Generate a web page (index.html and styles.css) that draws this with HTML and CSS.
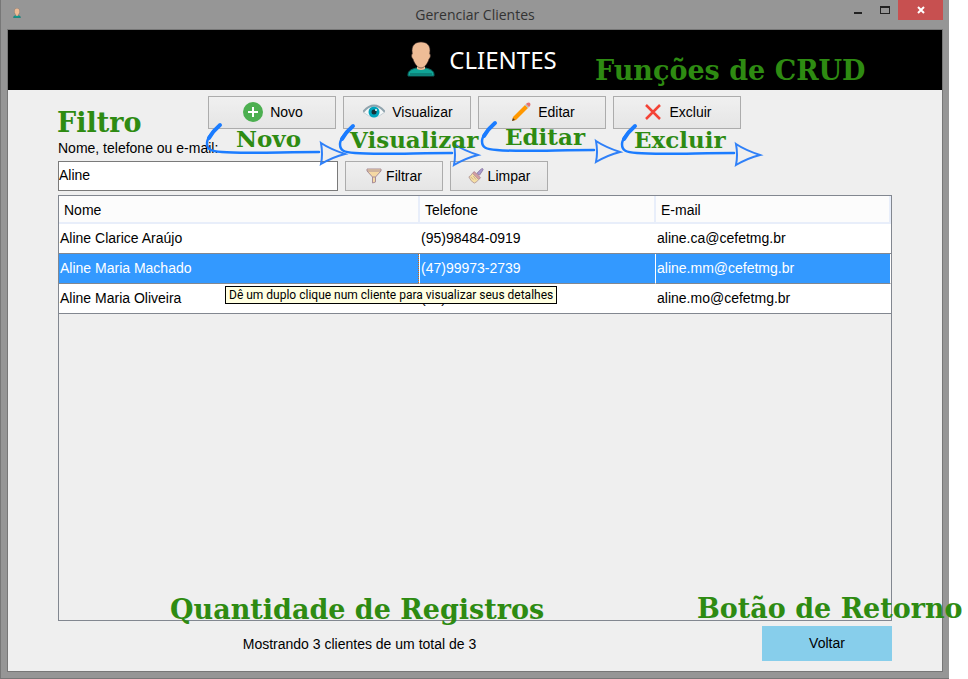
FILE: index.html
```html
<!DOCTYPE html>
<html lang="pt-BR">
<head>
<meta charset="utf-8">
<title>Gerenciar Clientes</title>
<link rel="stylesheet" href="styles.css">
</head>
<body>
<svg class="defs" width="0" height="0" aria-hidden="true">
  <symbol id="person" viewBox="0 0 28 36">
    <path fill="#0fa597" stroke="#0b5f5a" d="M1 35v-2q0-4 8-6h10q8 2 8 6v2z"/>
    <path fill="#eebc96" d="M10 24h8v4q-4 2-8 0z"/>
    <path stroke="#0b5f5a" fill="none" d="M3 33h22"/>
    <path fill="#eebc96" stroke="#3b2a26" stroke-width=".6" d="M14 1C8 1 5 4.500 5 9.500L5.300 13C4 13.500 4.500 17 6 18c1 4 4.500 9 8 9s7-5 8-9c1.500-1 2-4.500.7-5l.3-3.500C23 4.500 20 1 14 1z"/>
  </symbol>
  <symbol id="arrow" viewBox="0 0 150 50">
    <path d="M20 6C13 11 8 19 8 23c0 7 4 8 15 9 20 2 60 0 97 0" fill="none" stroke="#1b7cff" stroke-width="2.500" stroke-linecap="round"/>
    <path d="M21 5Q14 11 10 18" fill="none" stroke="#1b7cff" stroke-width="4" stroke-linecap="round"/>
    <path d="M122 23q9 6 24 11q-12 3-24 10q2-10 0-21z" fill="none" stroke="#2f80f8" stroke-width="2"/>
  </symbol>
</svg>
<div class="window">
  <header class="titlebar">
    <svg class="app-icon"><use href="#person"/></svg>
    <span class="window-title">Gerenciar Clientes</span>
    <div class="controls">
      <button class="control" aria-label="Minimizar"><svg width="10" height="10"><path d="M1 8h8" stroke="#222" stroke-width="2"/></svg></button>
      <button class="control" aria-label="Maximizar"><svg width="10" height="8"><path d="M0 0h10v8H0zM1 2v5h8V2z" fill="#222" fill-rule="evenodd"/></svg></button>
      <button class="control close" aria-label="Fechar"><svg width="8" height="8"><path d="M1 1l6 6M7 1L1 7" stroke="#fff" stroke-width="2"/></svg></button>
    </div>
  </header>
  <main class="client">
    <div class="banner">
      <svg class="banner-icon"><use href="#person"/></svg>
      <h1>CLIENTES</h1>
      <span class="note note-crud">Funções de CRUD</span>
    </div>
    <div class="content">
      <div class="toolbar">
        <button class="btn"><svg width="20" height="20"><circle cx="10" cy="10" r="10" fill="#4caf50"/><path d="M10 5v10M5 10h10" stroke="#fff" stroke-width="2"/></svg>Novo</button>
        <button class="btn"><svg width="22" height="20" viewBox="1 0 22 20"><path d="M1 10Q12-2 23 10Q12 21 1 10z" fill="#f5f8f9"/><path d="M1 10Q12-3 23 10" fill="none" stroke="#8fa3ad" stroke-width="2"/><path d="M1 10Q12 20 23 10" fill="none" stroke="#c2cdd2"/><circle cx="12" cy="10" r="5.500" fill="#00a5bd"/><circle cx="12" cy="10" r="2.500" fill="#16323a"/><circle cx="14" cy="8" r="1" fill="#fff"/></svg>Visualizar</button>
        <button class="btn"><svg width="20" height="20"><path d="M1 19l1-4L14 3l3 3L5 18z" fill="#ff9800"/><path d="M1 19l1-3 2 2z" fill="#4b3a35"/><path d="M14 3l1-1 3 3-1 1z" fill="#b0bec5"/><path d="M15 2l1-1q2-1 3 0t0 3l-1 1z" fill="#e57373"/></svg>Editar</button>
        <button class="btn"><svg width="18" height="18"><path d="M2 2l14 14M16 2L2 16" stroke="#f44336" stroke-width="2.500"/></svg>Excluir</button>
      </div>
      <form class="filter" onsubmit="return false">
        <label for="q">Nome, telefone ou e-mail:</label>
        <div class="filter-row">
          <input id="q" type="text" value="Aline">
          <button class="btn small"><svg width="16" height="16"><path d="M1 1h14v2L9.500 9v5l-3 1V9L1 3z" fill="#f5d9a4" stroke="#a98e98"/><path d="M1 3h14M6.500 9h3" stroke="#a98e98"/></svg>Filtrar</button>
          <button class="btn small"><svg width="16" height="16" viewBox="0 0 18 18"><path d="M10 6l5-5q2-1 2 1l-4 6z" fill="#a99bd0" stroke="#8c7aa0"/><path d="M7 4l7 7-2 2-7-7z" fill="#d6a0a4" stroke="#a77f8c"/><path d="M5 6l7 7q-2 3-5 4-4-2-6-7 2-1 4-4z" fill="#f5dfa4" stroke="#b49a98"/><path d="M3 10l3 3M6 9l3 4" stroke="#c9a989"/></svg>Limpar</button>
        </div>
      </form>
      <div class="table-box">
        <table>
          <colgroup><col class="col-name"><col class="col-phone"><col></colgroup>
          <thead><tr><th>Nome</th><th>Telefone</th><th>E-mail</th></tr></thead>
          <tbody>
            <tr><td>Aline Clarice Araújo</td><td>(95)98484-0919</td><td>aline.ca@cefetmg.br</td></tr>
            <tr class="selected"><td>Aline Maria Machado</td><td>(47)99973-2739</td><td>aline.mm@cefetmg.br</td></tr>
            <tr><td>Aline Maria Oliveira</td><td>(31)</td><td>aline.mo@cefetmg.br</td></tr>
          </tbody>
        </table>
        <div class="tooltip" role="tooltip">Dê um duplo clique num cliente para visualizar seus detalhes</div>
      </div>
      <div class="footer">
        <span class="status">Mostrando 3 clientes de um total de 3</span>
        <button class="back">Voltar</button>
      </div>
      <span class="note note-filter">Filtro</span>
      <svg class="arrow arrow-new"><use href="#arrow"/></svg>
      <svg class="arrow arrow-view"><use href="#arrow"/></svg>
      <svg class="arrow arrow-edit"><use href="#arrow"/></svg>
      <svg class="arrow arrow-delete"><use href="#arrow"/></svg>
      <span class="note minor note-new">Novo</span>
      <span class="note minor note-view">Visualizar</span>
      <span class="note minor note-edit">Editar</span>
      <span class="note minor note-delete">Excluir</span>
      <span class="note note-count">Quantidade de Registros</span>
      <span class="note note-back">Botão de Retorno</span>
    </div>
  </main>
</div>
</body>
</html>
```
FILE: styles.css
```css
* { box-sizing: border-box; }
body {
  margin: 0;
  background: #fff;
  color: #000;
  font: 14px/20px "Liberation Sans", Arial, sans-serif;
  overflow-x: hidden;
}
button, input { font: inherit; color: inherit; }
.defs { position: absolute; }

.window {
  display: flex;
  flex-direction: column;
  min-height: 100vh;
  margin-right: 19px;
  padding: 0 6px 6px;
  background: #969696;
  border: 1px solid #777;
  border-width: 0 0 1px 1px;
}
.titlebar {
  display: grid;
  grid-template-columns: 1fr auto 1fr;
  height: 29px;
  font: 14px/30px "Open Sans", "Noto Sans", sans-serif;
  color: #333;
}
.app-icon { width: 8px; height: 10px; margin: 8px 6px; }
.controls { display: flex; justify-content: flex-end; }
.control {
  display: flex;
  align-items: center;
  justify-content: center;
  width: 27px;
  height: 20px;
  padding: 0;
  border: 0;
  background: none;
}
.close { width: 45px; background: #c75050; }

.client {
  display: flex;
  flex: 1;
  flex-direction: column;
  border: 1px solid #777;
  background: #efefef;
}
.banner {
  position: relative;
  display: flex;
  align-items: center;
  justify-content: center;
  gap: 14px;
  height: 60px;
  padding: 0 0 2px 14px;
  background: #000;
}
.banner-icon { width: 28px; height: 36px; }
h1 {
  margin: 0;
  padding-top: 2px;
  color: #fff;
  font: 24px/32px "Noto Sans", sans-serif;
}
.content {
  position: relative;
  display: flex;
  flex: 1;
  flex-direction: column;
  padding: 6px 50px 10px;
}
.toolbar { display: flex; gap: 7px; margin-left: 150px; }
.btn {
  display: flex;
  align-items: center;
  justify-content: center;
  gap: 7px;
  width: 128px;
  height: 33px;
  padding: 0 0 1px 2px;
  border: 1px solid #acacac;
  background: linear-gradient(#f0f0f0, #e5e5e5);
}
.small { width: 98px; height: 30px; gap: 4px; padding: 0; }
.filter { padding-top: 9px; }
.filter label { display: block; }
.filter-row { display: flex; gap: 7px; margin-top: 3px; }
.filter input {
  width: 280px;
  height: 30px;
  padding: 0 0 2px;
  border: 1px solid #7a7a7a;
  background: #fff;
}

.table-box {
  position: relative;
  flex: 1;
  margin-top: 4px;
  border: 1px solid #828790;
}
table {
  width: 100%;
  table-layout: fixed;
  border-collapse: separate;
  border-spacing: 0;
  background: #fff;
}
.col-name { width: 361px; }
.col-phone { width: 236px; }
th {
  height: 28px;
  padding: 1px 5px 0;
  border: solid #e8eefa;
  border-width: 0 2px 2px 0;
  background: #fcfcfc;
  text-align: left;
  font-weight: normal;
}
td { height: 30px; padding: 0 1px 2px; border-bottom: 1px solid #828790; }
.selected td { background: #3399ff; color: #fff; border-right: 1px solid #fff; }
.selected td:first-child {
  background-image: repeating-linear-gradient(0deg, #d06a10 0 1px, transparent 1px 2px);
  background-position: right;
  background-size: 1px 100%;
  background-repeat: no-repeat;
}
.tooltip {
  position: absolute;
  left: 166px;
  top: 90px;
  padding: 0 3px;
  border: 1px solid #000;
  background: #ffffe1;
  font: 12px/16px Roboto, "Noto Sans", sans-serif;
  white-space: nowrap;
}
.footer {
  display: grid;
  grid-template-columns: minmax(0, 603px) 130px;
  justify-content: space-between;
  align-items: center;
  margin-top: 5px;
}
.status { text-align: center; }
.back { height: 35px; padding: 0 0 1px; border: 0; background: #87ceeb; }

/* Callouts drawn over the window */
.note {
  position: absolute;
  color: #2e8b12;
  font: bold 27px/36px "DejaVu Serif", serif;
  white-space: nowrap;
  pointer-events: none;
}
.minor { font-size: 23px; line-height: 32px; }
.note-crud { left: 587px; top: 23px; }
.note-filter { left: 49px; top: 15px; }
.note-new { left: 228px; top: 33px; }
.note-view { left: 342px; top: 34px; }
.note-edit { left: 497px; top: 31px; }
.note-delete { left: 626px; top: 34px; }
.note-count { left: 162px; bottom: 43px; }
.note-back { left: 689px; bottom: 44px; }
.arrow { position: absolute; width: 150px; height: 50px; pointer-events: none; }
.arrow-new { left: 191px; top: 30px; }
.arrow-view { left: 324px; top: 31px; }
.arrow-edit { left: 466px; top: 28px; }
.arrow-delete { left: 606px; top: 31px; }
```
